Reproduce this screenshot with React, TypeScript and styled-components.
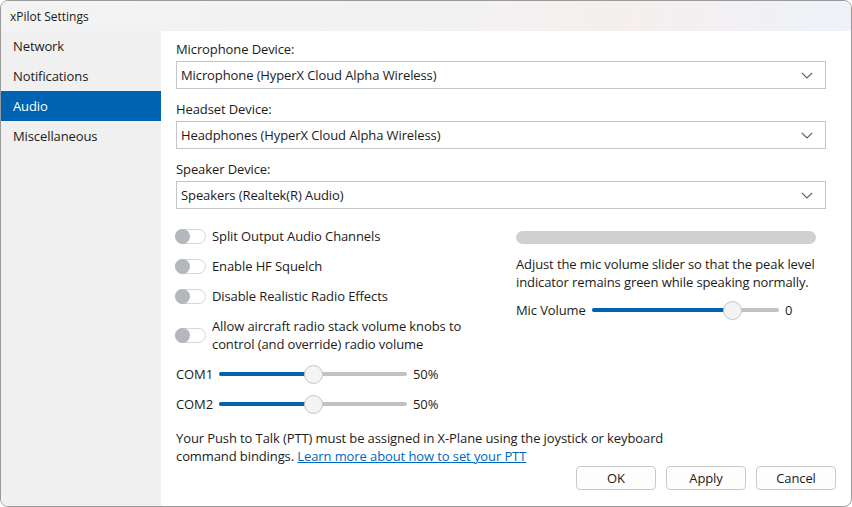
import React from "react";
import styled, { createGlobalStyle } from "styled-components";

const Global = createGlobalStyle`
  html, body { margin: 0; padding: 0; background: #ffffff; }
  body { font-family: "Open Sans", "Noto Sans", "Liberation Sans", sans-serif; color: #1b1b1b; }
  * { box-sizing: border-box; }
`;

const Window = styled.div`
  width: 852px;
  height: 507px;
  border: 1px solid #9a9a9a;
  border-radius: 8px;
  overflow: hidden;
  display: flex;
  flex-direction: column;
  background: #ffffff;
`;

const TitleBar = styled.div`
  height: 30px;
  flex: none;
  display: flex;
  align-items: center;
  padding-left: 9px;
  font-size: 12px;
  background: linear-gradient(90deg, #f3f3f3 0%, #f3f2f2 55%, #f5efef 75%, #eef2f8 100%);
`;

const Body = styled.div`
  flex: 1;
  display: flex;
  min-height: 0;
`;

const Sidebar = styled.nav`
  width: 160px;
  flex: none;
  background: #f0f0f0;
  display: flex;
  flex-direction: column;
`;

const NavItem = styled.div<{ $active?: boolean }>`
  height: 30px;
  display: flex;
  align-items: center;
  padding-left: 12px;
  font-size: 13px;
  letter-spacing: -0.1px;
  background: ${(p) => (p.$active ? "#0063b1" : "transparent")};
  color: ${(p) => (p.$active ? "#ffffff" : "#1b1b1b")};
`;

const Content = styled.main`
  flex: 1;
  display: flex;
  flex-direction: column;
  padding: 9px 15px 15px 15px;
  font-size: 13px;
  letter-spacing: -0.1px;
`;

const DeviceGroup = styled.div`
  display: flex;
  flex-direction: column;
  gap: 3px;
  margin-bottom: 11px;
`;

const Label = styled.div`
  line-height: 18px;
  height: 18px;
`;

const Select = styled.div`
  height: 28px;
  width: 650px;
  border: 1px solid #c2c5c9;
  display: flex;
  align-items: center;
  justify-content: space-between;
  padding: 0 12px 0 4px;
`;

const Columns = styled.div`
  display: flex;
  gap: 50px;
  margin-top: 1px;
`;

const LeftCol = styled.div`
  width: 290px;
  display: flex;
  flex-direction: column;
`;

const RightCol = styled.div`
  width: 302px;
  display: flex;
  flex-direction: column;
  padding-top: 10px;
`;

const ToggleRow = styled.div`
  min-height: 30px;
  display: flex;
  align-items: center;
  gap: 6px;
  padding: 6px 0;
  line-height: 18px;
`;

const ToggleTrack = styled.span`
  flex: none;
  width: 31px;
  height: 15px;
  border: 1px solid #d3d6da;
  border-radius: 8px;
  display: flex;
  align-items: center;
  margin-left: -1px;
`;

const ToggleKnob = styled.span`
  width: 15px;
  height: 15px;
  border-radius: 50%;
  background: #b4b8bd;
  margin-left: -1px;
`;

const SliderRow = styled.div<{ $offset?: number }>`
  height: 30px;
  display: flex;
  align-items: center;
  margin-top: ${(p) => p.$offset ?? 0}px;
`;

const SliderLabel = styled.span<{ $w: number }>`
  width: ${(p) => p.$w}px;
  flex: none;
`;

const Track = styled.div<{ $w: number }>`
  position: relative;
  width: ${(p) => p.$w}px;
  height: 4px;
  border-radius: 2px;
  background: #c2c2c2;
  flex: none;
`;

const TrackFill = styled.div`
  position: absolute;
  left: 0;
  top: 0;
  bottom: 0;
  border-radius: 2px;
  background: #0063b1;
`;

const Thumb = styled.div`
  position: absolute;
  top: 50%;
  width: 19px;
  height: 19px;
  margin-left: -9.5px;
  margin-top: -9.5px;
  border-radius: 50%;
  background: #f4f4f4;
  border: 1px solid #c6c6c6;
`;

const SliderValue = styled.span`
  margin-left: 6px;
`;

const LevelBar = styled.div`
  width: 300px;
  height: 13px;
  border-radius: 7px;
  background: #cfd0d2;
  margin-bottom: 11px;
`;

const Para = styled.p`
  margin: 0;
  line-height: 18px;
`;

const Footer = styled.div`
  margin-top: 10px;
  display: flex;
  flex-direction: column;
`;

const Link = styled.a`
  color: #0067c0;
  text-decoration: underline;
`;

const ButtonRow = styled.div`
  display: flex;
  justify-content: flex-end;
  gap: 10px;
  margin-top: 1px;
`;

const Button = styled.button`
  width: 80px;
  height: 24px;
  border: 1px solid #cacaca;
  border-radius: 4px;
  background: #fdfdfd;
  font-family: inherit;
  font-size: 13px;
  letter-spacing: -0.1px;
  color: #1b1b1b;
  padding: 0;
`;

const Chevron = () => (
  <svg width="12" height="7" viewBox="0 0 12 7">
    <path d="M0.8 0.8 L6 6 L11.2 0.8" fill="none" stroke="#5f5f5f" strokeWidth="1.2" />
  </svg>
);

const Toggle = () => (
  <ToggleTrack>
    <ToggleKnob />
  </ToggleTrack>
);

const Slider = ({
  label,
  labelW,
  w,
  pct,
  value,
  offset,
}: {
  label: string;
  labelW: number;
  w: number;
  pct: number;
  value: string;
  offset?: number;
}) => (
  <SliderRow $offset={offset}>
    <SliderLabel $w={labelW}>{label}</SliderLabel>
    <Track $w={w}>
      <TrackFill style={{ width: `${pct}%` }} />
      <Thumb style={{ left: `${pct}%` }} />
    </Track>
    <SliderValue>{value}</SliderValue>
  </SliderRow>
);

const devices = [
  ["Microphone Device:", "Microphone (HyperX Cloud Alpha Wireless)"],
  ["Headset Device:", "Headphones (HyperX Cloud Alpha Wireless)"],
  ["Speaker Device:", "Speakers (Realtek(R) Audio)"],
];

export default function App() {
  return (
    <>
      <Global />
      <Window>
        <TitleBar>xPilot Settings</TitleBar>
        <Body>
          <Sidebar>
            <NavItem>Network</NavItem>
            <NavItem>Notifications</NavItem>
            <NavItem $active>Audio</NavItem>
            <NavItem>Miscellaneous</NavItem>
          </Sidebar>
          <Content>
            {devices.map(([l, v]) => (
              <DeviceGroup key={l}>
                <Label>{l}</Label>
                <Select>
                  <span>{v}</span>
                  <Chevron />
                </Select>
              </DeviceGroup>
            ))}
            <Columns>
              <LeftCol>
                <ToggleRow>
                  <Toggle />
                  <span>Split Output Audio Channels</span>
                </ToggleRow>
                <ToggleRow>
                  <Toggle />
                  <span>Enable HF Squelch</span>
                </ToggleRow>
                <ToggleRow>
                  <Toggle />
                  <span>Disable Realistic Radio Effects</span>
                </ToggleRow>
                <ToggleRow>
                  <Toggle />
                  <span>Allow aircraft radio stack volume knobs to control (and override) radio volume</span>
                </ToggleRow>
                <Slider label="COM1" labelW={43} w={188} pct={50} value="50%" />
                <Slider label="COM2" labelW={43} w={188} pct={50} value="50%" />
              </LeftCol>
              <RightCol>
                <LevelBar />
                <Para>
                  Adjust the mic volume slider so that the peak level
                  <br />
                  indicator remains green while speaking normally.
                </Para>
                <Slider label="Mic Volume" labelW={76} w={187} pct={75} value="0" offset={4} />
              </RightCol>
            </Columns>
            <Footer>
              <Para>
                Your Push to Talk (PTT) must be assigned in X-Plane using the joystick or keyboard
                <br />
                command bindings. <Link href="#">Learn more about how to set your PTT</Link>
              </Para>
              <ButtonRow>
                <Button>OK</Button>
                <Button>Apply</Button>
                <Button>Cancel</Button>
              </ButtonRow>
            </Footer>
          </Content>
        </Body>
      </Window>
    </>
  );
}
